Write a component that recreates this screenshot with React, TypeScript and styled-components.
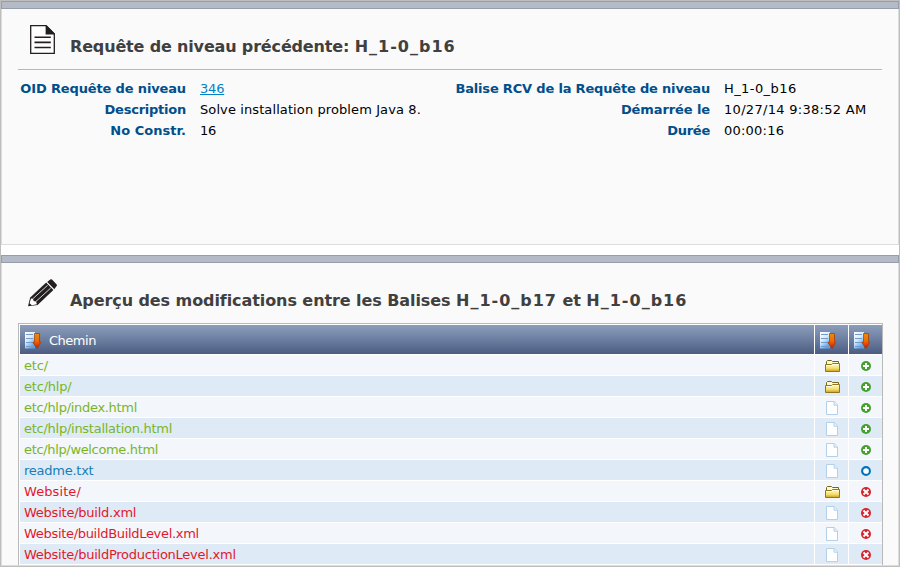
import React from 'react';
import styled, { createGlobalStyle } from 'styled-components';

const GlobalStyle = createGlobalStyle`
  *, *::before, *::after { box-sizing: border-box; }
  html, body { margin: 0; padding: 0; overflow: hidden; background: #fff; }
  body { font: 13px/21px "DejaVu Sans", Verdana, sans-serif; color: #000; }
  svg { display: block; flex: none; }
`;

const Page = styled.div`
  width: 900px;
  height: 567px;
  border: 1px solid #bebebe;
  display: flex;
  flex-direction: column;
  gap: 10px;
  overflow: hidden;
`;

const Panel = styled.section<{ $height?: number }>`
  flex: none;
  height: ${(p) => (p.$height ? `${p.$height}px` : 'auto')};
  background: #fafafa;
  border: solid #dcdcdc;
  border-width: 0 1px 1px;
`;

const PanelBar = styled.div`
  height: 8px;
  margin: 0 -1px;
  background: #b4bac6;
  border: 1px solid #989dab;
`;

const PanelBody = styled.div`
  padding: 0 15px 0 16px;
`;

const TitleRow = styled.header<{ $height: number; $ruled?: boolean }>`
  display: flex;
  align-items: flex-start;
  height: ${(p) => p.$height}px;
  padding: 16px 0 0 10px;
  border-bottom: ${(p) => (p.$ruled ? '1px solid #b9b9b9' : 'none')};
  margin-right: ${(p) => (p.$ruled ? '1px' : '0')};
`;

const IconSlot = styled.div<{ $indent?: number }>`
  width: 42px;
  flex: none;
  padding-left: ${(p) => p.$indent ?? 0}px;
`;

const Title = styled.h1<{ $spacing: number }>`
  margin: 12px 0 0;
  font-size: 16px;
  line-height: 20px;
  font-weight: bold;
  color: #404040;
  white-space: nowrap;
  letter-spacing: ${(p) => p.$spacing}px;
`;

const Tag = styled.span`
  letter-spacing: 1px;
`;

const Details = styled.div`
  display: grid;
  grid-template-columns: 168px 255px 269px 1fr;
  grid-auto-rows: 21px;
  padding-top: 8px;
`;

const Label = styled.div<{ $spacing: number }>`
  text-align: right;
  font-weight: bold;
  color: #004f8b;
  white-space: nowrap;
  letter-spacing: ${(p) => p.$spacing}px;
`;

const Value = styled.div<{ $spacing: number }>`
  padding-left: 14px;
  white-space: nowrap;
  letter-spacing: ${(p) => p.$spacing}px;
`;

const Link = styled.a`
  color: #0082c8;
  text-decoration: underline;
`;

const Table = styled.div`
  display: flex;
  flex-direction: column;
  gap: 1px;
  padding: 1px 0 1px 1px;
  border: solid #b9b9b9;
  border-width: 1px 1px 0;
  background: #fff;
`;

const Row = styled.div`
  display: grid;
  grid-template-columns: 794px 33px 33px;
  column-gap: 1px;
  height: 20px;
`;

const HeadRow = styled(Row)`
  height: 29px;
`;

const HeadCell = styled.div`
  display: flex;
  align-items: center;
  gap: 8px;
  padding: 1px 0 0 5px;
  color: #fff;
  letter-spacing: -0.48px;
  background: linear-gradient(#8c9dbb, #6d7fa1 50%, #4b5c80);
`;

type Change = 'added' | 'modified' | 'deleted';

const changeColor: Record<Change, string> = {
  added: '#7ab51d',
  modified: '#187db8',
  deleted: '#e2182a',
};

const Cell = styled.div<{ $alt: boolean }>`
  display: flex;
  align-items: center;
  justify-content: center;
  padding-top: 2px;
  background: ${(p) => (p.$alt ? '#deebf7' : '#f3f6fb')};
`;

const KindCell = styled(Cell)`
  padding-left: 1px;
`;

const PathCell = styled(Cell)<{ $change: Change; $spacing: number }>`
  justify-content: flex-start;
  padding: 1px 0 0 4px;
  line-height: 19px;
  color: ${(p) => changeColor[p.$change]};
  letter-spacing: ${(p) => p.$spacing}px;
`;

const DocumentIcon = () => (
  <svg width="26" height="29" viewBox="0 0 26 29">
    <path d="M.7.7H16L24.3 9v19.3H.7z" fill="#fff" stroke="#231f20" strokeWidth="1.3" />
    <path d="M15.6.3h1L25 8.7v.9h-9.4z" fill="#231f20" />
    <path d="M4.5 12.2h16.3M4.5 17.4h16.3M4.5 22.5h16.3" stroke="#231f20" strokeWidth="1.6" />
  </svg>
);

const PencilIcon = () => (
  <svg width="30" height="28" viewBox="0 0 30 28">
    <path d="M0 27.3 2.2 18.4 18.2 3.6 25.4 11.1 9.6 26z" fill="#231f20" />
    <path d="M19.2 2.9 22.2.5q1-.6 1.8.1l4.7 4.8q.6.9-.1 1.7L26.3 10.2z" fill="#231f20" />
    <path d="M3 19.4 5 19.8 5.6 22 8 22.4 8.9 25.2 3.8 26.2 1.6 24.2z" fill="#fff" />
    <path d="M4.8 19.8 19.6 6.3M7.8 22.6 22.6 9.2" stroke="#e8e8e8" strokeWidth=".9" fill="none" />
    <path d="M18.5 3.2 26 10.7" stroke="#fafafa" strokeWidth=".6" />
  </svg>
);

const SortIcon = () => (
  <svg width="16" height="17" viewBox="0 0 16 17">
    <defs>
      <linearGradient id="sheet" x1="0" y1="0" x2=".6" y2="1">
        <stop offset="0" stopColor="#fff" />
        <stop offset=".5" stopColor="#d4ebff" />
        <stop offset="1" stopColor="#4ba6f2" />
      </linearGradient>
      <linearGradient id="arrow" gradientUnits="userSpaceOnUse" x1="0" y1="1" x2="0" y2="17">
        <stop offset="0" stopColor="#e89005" />
        <stop offset=".5" stopColor="#ee6a05" />
        <stop offset=".75" stopColor="#e03a08" />
        <stop offset="1" stopColor="#b81c04" />
      </linearGradient>
    </defs>
    <path d="M0 0h10v16.5H0z" fill="url(#sheet)" />
    <path d="M1 2.5h7M1 6.5h7M1 10.5h6M1 14.5h8" stroke="#7899c8" strokeWidth="1" />
    <path d="M9.5 1.5h5v8.6h1.9L12 16.6 7.3 10.1h2.2z" fill="url(#arrow)" />
    <path d="M9.5 1.5h5v8.6h1.2L12 16.2 7.8 10.3h1.7z" fill="none" stroke="#a03a0c" strokeWidth=".7" />
  </svg>
);

const FolderIcon = () => (
  <svg width="15" height="12" viewBox="0 0 15 12">
    <defs>
      <linearGradient id="folder" x1="0" y1="0" x2="0" y2="1">
        <stop offset="0" stopColor="#fffbd0" />
        <stop offset=".6" stopColor="#f5df68" />
        <stop offset="1" stopColor="#c99d22" />
      </linearGradient>
    </defs>
    <path d="M1.5 5V1.5l1-1h4l1 1h6V5z" fill="#fff8c8" stroke="#77651c" />
    <path d="M.5 4.5h6l1-1h7v8H.5z" fill="url(#folder)" stroke="#8f7824" />
    <path d="M1.5 5.5H7l1-1h5.5" stroke="#fffde8" fill="none" />
  </svg>
);

const FileIcon = () => (
  <svg width="12" height="14" viewBox="0 0 12 14">
    <path d="M.5.5h7.7l3.3 3.3v9.7H.5z" fill="#fff" stroke="#b3d0ea" />
    <path d="M8 .5v3.7h3.5" fill="#e8f1fa" stroke="#b3d0ea" />
  </svg>
);

const ChangeIcon = ({ change }: { change: Change }) => (
  <svg width="10" height="10" viewBox="0 0 10 10">
    {change === 'modified' ? (
      <circle cx="5" cy="5" r="3.9" fill="#fff" stroke="#0073bd" strokeWidth="2.1" />
    ) : (
      <circle cx="5" cy="5" r="5" fill={change === 'added' ? '#45a12d' : '#d8232a'} />
    )}
    {change === 'added' && <path d="M5 2v6M2 5h6" stroke="#fff" strokeWidth="2" />}
    {change === 'deleted' && <path d="m2.5 2.5 5 5m0-5-5 5" stroke="#fff" strokeWidth="1.9" />}
  </svg>
);

const rows: { path: string; change: Change; spacing: number }[] = [
  { path: 'etc/', change: 'added', spacing: -0.2 },
  { path: 'etc/hlp/', change: 'added', spacing: -0.2 },
  { path: 'etc/hlp/index.html', change: 'added', spacing: -0.3 },
  { path: 'etc/hlp/installation.html', change: 'added', spacing: -0.26 },
  { path: 'etc/hlp/welcome.html', change: 'added', spacing: -0.34 },
  { path: 'readme.txt', change: 'modified', spacing: -0.25 },
  { path: 'Website/', change: 'deleted', spacing: 0.08 },
  { path: 'Website/build.xml', change: 'deleted', spacing: -0.24 },
  { path: 'Website/buildBuildLevel.xml', change: 'deleted', spacing: -0.31 },
  { path: 'Website/buildProductionLevel.xml', change: 'deleted', spacing: -0.25 },
];

export default function App() {
  return (
    <>
      <GlobalStyle />
      <Page>
        <Panel $height={244}>
          <PanelBar />
          <PanelBody>
            <TitleRow $height={61} $ruled>
              <IconSlot $indent={2}><DocumentIcon /></IconSlot>
              <Title $spacing={-0.16}>Requête de niveau précédente: <Tag>H_1-0_b16</Tag></Title>
            </TitleRow>
            <Details>
              <Label $spacing={-0.14}>OID Requête de niveau</Label>
              <Value $spacing={-0.2}><Link>346</Link></Value>
              <Label $spacing={-0.18}>Balise RCV de la Requête de niveau</Label>
              <Value $spacing={0.42}>H_1-0_b16</Value>
              <Label $spacing={-0.24}>Description</Label>
              <Value $spacing={0.1}>Solve installation problem Java 8.</Value>
              <Label $spacing={-0.1}>Démarrée le</Label>
              <Value $spacing={0.3}>10/27/14 9:38:52 AM</Value>
              <Label $spacing={0.02}>No Constr.</Label>
              <Value $spacing={-0.2}>16</Value>
              <Label $spacing={-0.25}>Durée</Label>
              <Value $spacing={0.22}>00:00:16</Value>
            </Details>
          </PanelBody>
        </Panel>
        <Panel>
          <PanelBar />
          <PanelBody>
            <TitleRow $height={60}>
              <IconSlot><PencilIcon /></IconSlot>
              <Title $spacing={-0.08}>
                Aperçu des modifications entre les Balises <Tag>H_1-0_b17</Tag> et <Tag>H_1-0_b16</Tag>
              </Title>
            </TitleRow>
            <Table>
              <HeadRow>
                <HeadCell><SortIcon />Chemin</HeadCell>
                <HeadCell><SortIcon /></HeadCell>
                <HeadCell><SortIcon /></HeadCell>
              </HeadRow>
              {rows.map(({ path, change, spacing }, i) => (
                <Row key={path}>
                  <PathCell $alt={i % 2 === 1} $change={change} $spacing={spacing}>{path}</PathCell>
                  <KindCell $alt={i % 2 === 1}>{path.endsWith('/') ? <FolderIcon /> : <FileIcon />}</KindCell>
                  <Cell $alt={i % 2 === 1}><ChangeIcon change={change} /></Cell>
                </Row>
              ))}
            </Table>
          </PanelBody>
        </Panel>
      </Page>
    </>
  );
}
